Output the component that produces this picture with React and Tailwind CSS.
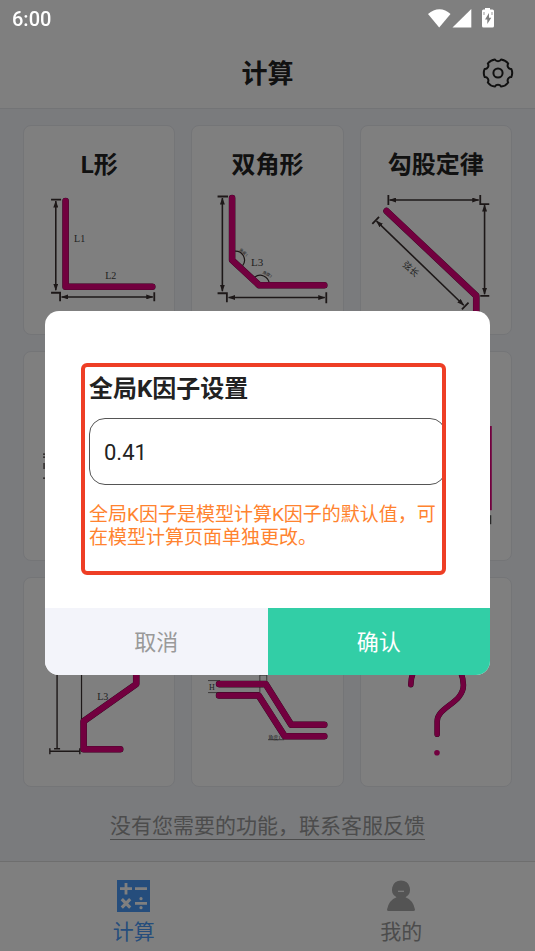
import React, { useState } from "react";

const Dimension = ({ d }) => (
  <path
    d={d}
    fill="none"
    stroke="#3a3030"
    strokeWidth="1.6"
    markerStart="url(#arrow)"
    markerEnd="url(#arrow)"
  />
);

const Ticks = ({ d, width = 1.8 }) => (
  <path d={d} fill="none" stroke="#3a3030" strokeWidth={width} />
);

const Plate = ({ d, width = 6 }) => (
  <g fill="none" strokeLinecap="round" strokeLinejoin="round">
    <path d={d} stroke="#5a1038" strokeWidth={width + 0.6} />
    <path d={d} stroke="#e4007f" strokeWidth={width} />
  </g>
);

const Label = ({ x, y, size = 10, rotate = 0, children }) => (
  <text
    x={x}
    y={y}
    fontSize={size}
    transform={`rotate(${rotate} ${x} ${y})`}
    fill="#444"
    className="font-['Liberation_Serif','Noto_Sans_CJK_SC',serif]"
  >
    {children}
  </text>
);

const shapes = [
  {
    id: "l",
    title: "L形",
    viewBox: "24 185 150 149",
    drawing: (
      <>
        <Dimension d="M55.7 201V290" />
        <Ticks d="M51 199.5H61M51 292.5H60V301M154 292V301" />
        <Dimension d="M61.5 296.7H152.5" />
        <Plate d="M65.5 201V286.5H152" />
        <Label x={74} y={242}>L1</Label>
        <Label x={105} y={279}>L2</Label>
      </>
    ),
  },
  {
    id: "double",
    title: "双角形",
    viewBox: "192 185 150 149",
    drawing: (
      <>
        <Dimension d="M222.3 198V291" />
        <Ticks d="M217.5 196.5H228M217.5 293H226.8V302M326 292V303" />
        <Dimension d="M228.5 297.3H324.5" />
        <Ticks d="M235 251A9 9 0 0 1 242.5 265.5M254.5 277A9 9 0 0 1 269 283" width={1.2} />
        <Plate d="M232 198V260L259 285H324" />
        <Label x={251} y={266} size={11}>L3</Label>
        <Label x={239} y={250} size={4} rotate={42}>角度1</Label>
        <Label x={262} y={273} size={4} rotate={28}>角度2</Label>
      </>
    ),
  },
  {
    id: "pythagoras",
    title: "勾股定律",
    viewBox: "361 185 150 149",
    drawing: (
      <>
        <Dimension d="M389.5 200H478.5" />
        <Ticks d="M388.3 195V205M480 195V204H489M480 295.7H489" />
        <Dimension d="M484.3 205V294" />
        <Dimension d="M376.5 221L463.5 305" />
        <Ticks d="M372.3 223.7L379 216.7M461.7 309L468.3 302.3" />
        <Plate d="M386.5 211L476 295.5V326" />
        <Label x={402} y={265} size={9} rotate={43}>弦长</Label>
      </>
    ),
  },
  {
    id: "z",
    viewBox: "24 411 150 149",
    drawing: <Ticks d="M43 454H47M43 457H47M44 463V469M43 478H47" width={1.2} />,
  },
  { id: "u", viewBox: "192 411 150 149", drawing: null },
  {
    id: "box",
    viewBox: "361 411 150 149",
    drawing: (
      <>
        <path d="M486 426H491.5V510H486Z" fill="#e4007f" />
        <path d="M486 515H491V524H486Z" fill="#555" />
      </>
    ),
  },
  {
    id: "step",
    viewBox: "24 637 150 149",
    drawing: (
      <>
        <Ticks d="M57 660V748.5M54 748.5H60M49.5 751H80M49.8 748V754M79.7 748V754" width={1.4} />
        <Ticks d="M81.4 660V725" width={1.2} />
        <Plate d="M136 660V684L83.5 721V749H120" />
        <Label x={97} y={700}>L3</Label>
      </>
    ),
  },
  {
    id: "offset",
    viewBox: "192 637 150 149",
    drawing: (
      <>
        <Ticks d="M208 680.5H220M208 692.5H220M259.7 692V675H266.6V684M268 739.5H284" width={0.7} />
        <Plate d="M219 684H265.5L291 724.5H324" />
        <Plate d="M219 695.3H258.5L284.5 736H324" />
        <Label x={209} y={690} size={8}>H</Label>
        <Label x={268} y={738.5} size={5}>角度1</Label>
      </>
    ),
  },
  {
    id: "custom",
    viewBox: "361 637 150 149",
    drawing: (
      <>
        <Plate d="M410.7 684.5C412 647 462 647 463.2 685C463.2 703 437 707 437 721V734" width={5} />
        <circle cx="436.8" cy="752.5" r="2.8" fill="#e4007f" />
      </>
    ),
  },
];

const StatusBar = () => (
  <div className="relative z-30 flex h-[37px] items-center justify-between pl-3 pr-10 pt-px font-['Roboto',sans-serif] text-xl font-medium text-white">
    <span>6:00</span>
    <svg viewBox="0 0 68 22" className="h-[22px] w-[68px]" fill="#fff">
      <path d="M1 6C8-.5 17-.5 23.5 6L12.2 19.5Z" />
      <path d="M25.5 19.5L44.3 1V19.5Z" />
      <path
        fillRule="evenodd"
        d="M58 1.5V0h5v1.5h2.5Q67 1.5 67 3v15q0 1.5-1.5 1.5h-9q-1.5 0-1.5-1.5V3q0-1.5 1.5-1.5ZM62 5l-4 6.5h2.3V16l4-6.2H62Z"
      />
      <path d="M57 4v3M65 4v3" stroke="#999" strokeWidth="1" />
    </svg>
  </div>
);

const GearIcon = () => (
  <svg viewBox="0 0 32 32" className="size-8" fill="none" stroke="#222" strokeWidth="2" strokeLinejoin="round">
    <path d="M29.3 11.9A10 10 0 0 1 29.3 20.1A3.5 3.5 0 0 0 26.2 25.5A10 10 0 0 1 19.1 29.6A3.5 3.5 0 0 0 12.9 29.6A10 10 0 0 1 5.8 25.5A3.5 3.5 0 0 0 2.7 20.1A10 10 0 0 1 2.7 11.9A3.5 3.5 0 0 0 5.8 6.5A10 10 0 0 1 12.9 2.4A3.5 3.5 0 0 0 19.1 2.4A10 10 0 0 1 26.2 6.5A3.5 3.5 0 0 0 29.3 11.9Z" />
    <circle cx="16" cy="16" r="4.6" />
  </svg>
);

const CalculatorIcon = () => (
  <svg viewBox="0 0 33 32" className="h-8 w-[33px]">
    <path d="M0 0H33V32H0Z" fill="#4a9bf8" />
    <g fill="none" stroke="#fff" strokeWidth="2.8">
      <path d="M3 8.7H15M9 3V14.5M18 8.7H30M18 23.3H30" />
      <path d="M4.8 19.2L13.2 27.6M13.2 19.2L4.8 27.6" strokeWidth="3.2" />
    </g>
    <circle cx="24" cy="18.7" r="1.6" fill="#fff" />
    <circle cx="24" cy="27.7" r="1.6" fill="#fff" />
  </svg>
);

const PersonIcon = () => (
  <svg viewBox="0 0 28 32" className="h-8 w-7" fill="#a8a8a8">
    <path d="M14 .5A9 9 0 0 1 18.5 17.3Q26 20 28 29.5Q28 31 26.5 31H1.5Q0 31 0 29.5Q2 20 9.5 17.3A9 9 0 0 1 14 .5Z" />
    <path d="M11 11.3H17" stroke="#fff" strokeWidth="1.2" />
  </svg>
);

const KFactorDialog = ({ value, onChange, onClose }) => (
  <div className="fixed inset-0 z-20 flex items-center bg-black/50 px-[45px] pt-[35px]">
    <div
      role="dialog"
      aria-modal="true"
      aria-labelledby="k-title"
      className="w-full overflow-hidden rounded-[14px] bg-white"
    >
      <div className="relative px-11 pb-[59px] pt-[62px]">
        <h2 id="k-title" className="text-2xl font-bold text-[#222]">
          <label htmlFor="k-factor">全局K因子设置</label>
        </h2>
        <input
          id="k-factor"
          type="text"
          inputMode="decimal"
          value={value}
          onChange={(e) => onChange(e.target.value)}
          className="mt-[13px] block h-[67px] w-full rounded-[16px] border border-[#555] px-[14px] pt-[2px] text-[22px] text-[#222] outline-none"
        />
        <p className="mt-[18px] text-[19px] leading-[23px] text-[#ff832f]">
          全局K因子是模型计算K因子的默认值，可在模型计算页面单独更改。
        </p>
        <div className="pointer-events-none absolute bottom-[33px] left-9 right-11 top-[52px] rounded-md border-4 border-[#ee3e25]"></div>
      </div>
      <div className="grid h-[67px] grid-cols-2 text-[22px]">
        <button type="button" onClick={onClose} className="bg-[#f3f4fa] pt-[2px] text-[#999]">
          取消
        </button>
        <button type="button" onClick={onClose} className="bg-[#32cea6] pt-[2px] text-white">
          确认
        </button>
      </div>
    </div>
  </div>
);

const App = () => {
  const [open, setOpen] = useState(true);
  const [kFactor, setKFactor] = useState("0.41");

  return (
    <div className="flex min-h-screen flex-col bg-white font-['Roboto','Noto_Sans_CJK_SC',sans-serif] text-[#222]">
      <svg className="absolute size-0" aria-hidden="true">
        <defs>
          <marker
            id="arrow"
            viewBox="0 0 7 5"
            refX="6.5"
            refY="2.5"
            markerWidth="7"
            markerHeight="5"
            markerUnits="userSpaceOnUse"
            orient="auto-start-reverse"
          >
            <path d="M0 0L7 2.5L0 5Z" fill="#3a3030" />
          </marker>
        </defs>
      </svg>

      <StatusBar />
      <header className="grid h-[72px] grid-cols-[1fr_auto_1fr] items-center border-b border-[#e6e8ec] px-[21px]">
        <h1 className="col-start-2 pt-1 text-[26px] font-bold">计算</h1>
        <button type="button" aria-label="设置" onClick={() => setOpen(true)} className="justify-self-end">
          <GearIcon />
        </button>
      </header>

      <main className="flex flex-1 flex-col bg-[#f4f6fa] px-[23px] pt-4">
        <div className="grid grid-cols-3 gap-4">
          {shapes.map((shape) => (
            <section
              key={shape.id}
              className="flex min-h-[210px] flex-col rounded-lg border border-[#e8eaef] bg-white"
            >
              {shape.title && (
                <h2 className="pt-[23px] text-center text-2xl font-bold">{shape.title}</h2>
              )}
              <svg viewBox={shape.viewBox} className="mt-auto w-full">
                {shape.drawing}
              </svg>
            </section>
          ))}
        </div>
        <div className="flex flex-1 items-center justify-center pt-1">
          <a href="#feedback" className="border-b border-[#999] text-[21px] leading-[26px] text-[#999]">
            没有您需要的功能，联系客服反馈
          </a>
        </div>
      </main>

      <nav className="grid h-[90px] grid-cols-2 border-t border-[#dcdcdc] text-[21px] leading-[30px]">
        <a href="#calc" className="flex flex-col items-center gap-[5px] pt-[18px] text-[#4a9bf8]">
          <CalculatorIcon />
          计算
        </a>
        <a href="#mine" className="flex flex-col items-center gap-[5px] pt-[18px] text-[#999]">
          <PersonIcon />
          我的
        </a>
      </nav>

      {open && (
        <KFactorDialog value={kFactor} onChange={setKFactor} onClose={() => setOpen(false)} />
      )}
    </div>
  );
};

export default App;
